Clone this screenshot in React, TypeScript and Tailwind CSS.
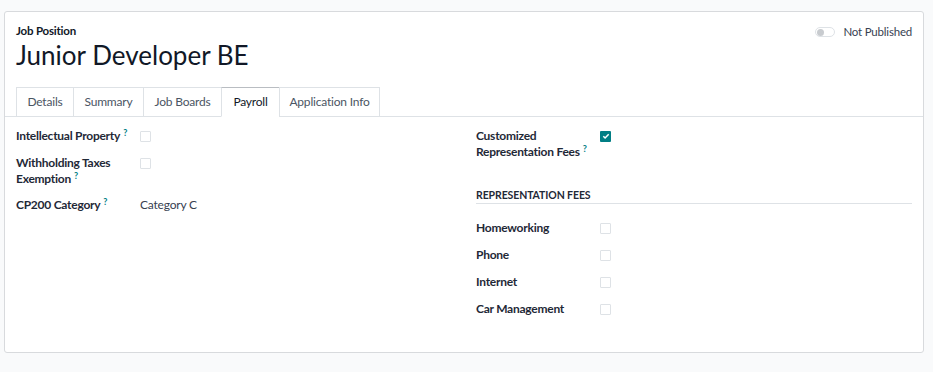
import React from "react";

const font = { fontFamily: 'Lato, "Noto Sans", sans-serif' };

function Help() {
  return <sup className="ml-[3px] text-[9px] font-bold tracking-normal text-[#017e84]">?</sup>;
}

function Box({ checked = false }: { checked?: boolean }) {
  if (checked) {
    return (
      <span className="flex h-[11px] w-[11px] items-center justify-center rounded-[1px] bg-[#017e84]">
        <svg width="8" height="8" viewBox="0 0 8 8">
          <path d="M1.3 4.2 L3.1 6 L6.7 2.2" stroke="white" strokeWidth="1.5" fill="none" />
        </svg>
      </span>
    );
  }
  return <span className="block h-[11px] w-[11px] rounded-[1px] border border-[#dee2e6] bg-white" />;
}

function Row({ label, children, h = "h-[27px]" }: { label: React.ReactNode; children?: React.ReactNode; h?: string }) {
  return (
    <div className={`flex ${h}`}>
      <div className="w-[124px] shrink-0 whitespace-nowrap text-[12px] font-bold leading-[16px] tracking-[-0.25px] text-[#1f2937]">{label}</div>
      <div className="flex h-[16px] items-center">{children}</div>
    </div>
  );
}

export default function App() {
  const tabs: [string, string][] = [
    ["Details", "w-[58px]"],
    ["Summary", "w-[71px]"],
    ["Job Boards", "w-[79px]"],
    ["Payroll", "w-[59px]"],
    ["Application Info", "w-[101px]"],
  ];
  return (
    <div className="h-[372px] w-[933px] bg-[#f9fafb] pt-[11px] pl-[4px] pr-[9px]" style={font}>
      <div className="h-[342px] rounded-[3px] border border-[#d8dadd] bg-white">
        <div className="flex justify-between px-[11px] pt-[12px]">
          <div>
            <div className="text-[11.5px] font-bold leading-[14px] tracking-[-0.2px] text-[#111827]">Job Position</div>
            <div className="text-[26px] leading-[34px] text-[#111827]">Junior Developer BE</div>
          </div>
          <div className="flex items-start gap-[8px]">
            <span className="mt-[3px] flex h-[10px] w-[20px] items-center rounded-full border border-[#dee2e6] bg-white px-[1px]">
              <span className="h-[7px] w-[7px] rounded-full bg-[#c8cbcf]" />
            </span>
            <span className="text-[11.5px] leading-[16px] tracking-[-0.2px] text-[#374151]">Not Published</span>
          </div>
        </div>
        <div className="mt-[15px] flex border-b border-[#dee2e6] px-[11px]">
          {tabs.map(([t, w], i) => {
            const active = t === "Payroll";
            return (
              <div
                key={t}
                className={`-mb-px h-[30px] border text-center text-[12px] leading-[28px] tracking-[-0.2px] ${w} ${i > 0 ? "-ml-px" : ""} ${
                  active
                    ? "border-[#dee2e6] border-t-[#b9bdc2] border-b-white bg-white text-[#111827]"
                    : "border-[#dee2e6] text-[#4b5563]"
                }`}
              >
                {t}
              </div>
            );
          })}
        </div>
        <div className="flex px-[11px] pt-[11px]">
          <div className="w-[460px]">
            <Row label={<>Intellectual Property<Help /></>}>
              <Box />
            </Row>
            <Row h="h-[42px]" label={<>Withholding Taxes<br />Exemption<Help /></>}>
              <Box />
            </Row>
            <Row label={<>CP200 Category<Help /></>}>
              <span className="text-[12px] font-normal leading-[16px] tracking-[-0.2px] text-[#374151]">Category C</span>
            </Row>
          </div>
          <div className="flex-1">
            <Row h="h-[60px]" label={<>Customized<br />Representation Fees<Help /></>}>
              <Box checked />
            </Row>
            <div className="border-b border-[#dee2e6] pb-[1px] text-[10.5px] font-bold leading-[14px] tracking-[-0.1px] text-[#1f2937]">
              REPRESENTATION FEES
            </div>
            <div className="pt-[16px]">
              <Row label="Homeworking"><Box /></Row>
              <Row label="Phone"><Box /></Row>
              <Row label="Internet"><Box /></Row>
              <Row label="Car Management"><Box /></Row>
            </div>
          </div>
        </div>
      </div>
    </div>
  );
}
